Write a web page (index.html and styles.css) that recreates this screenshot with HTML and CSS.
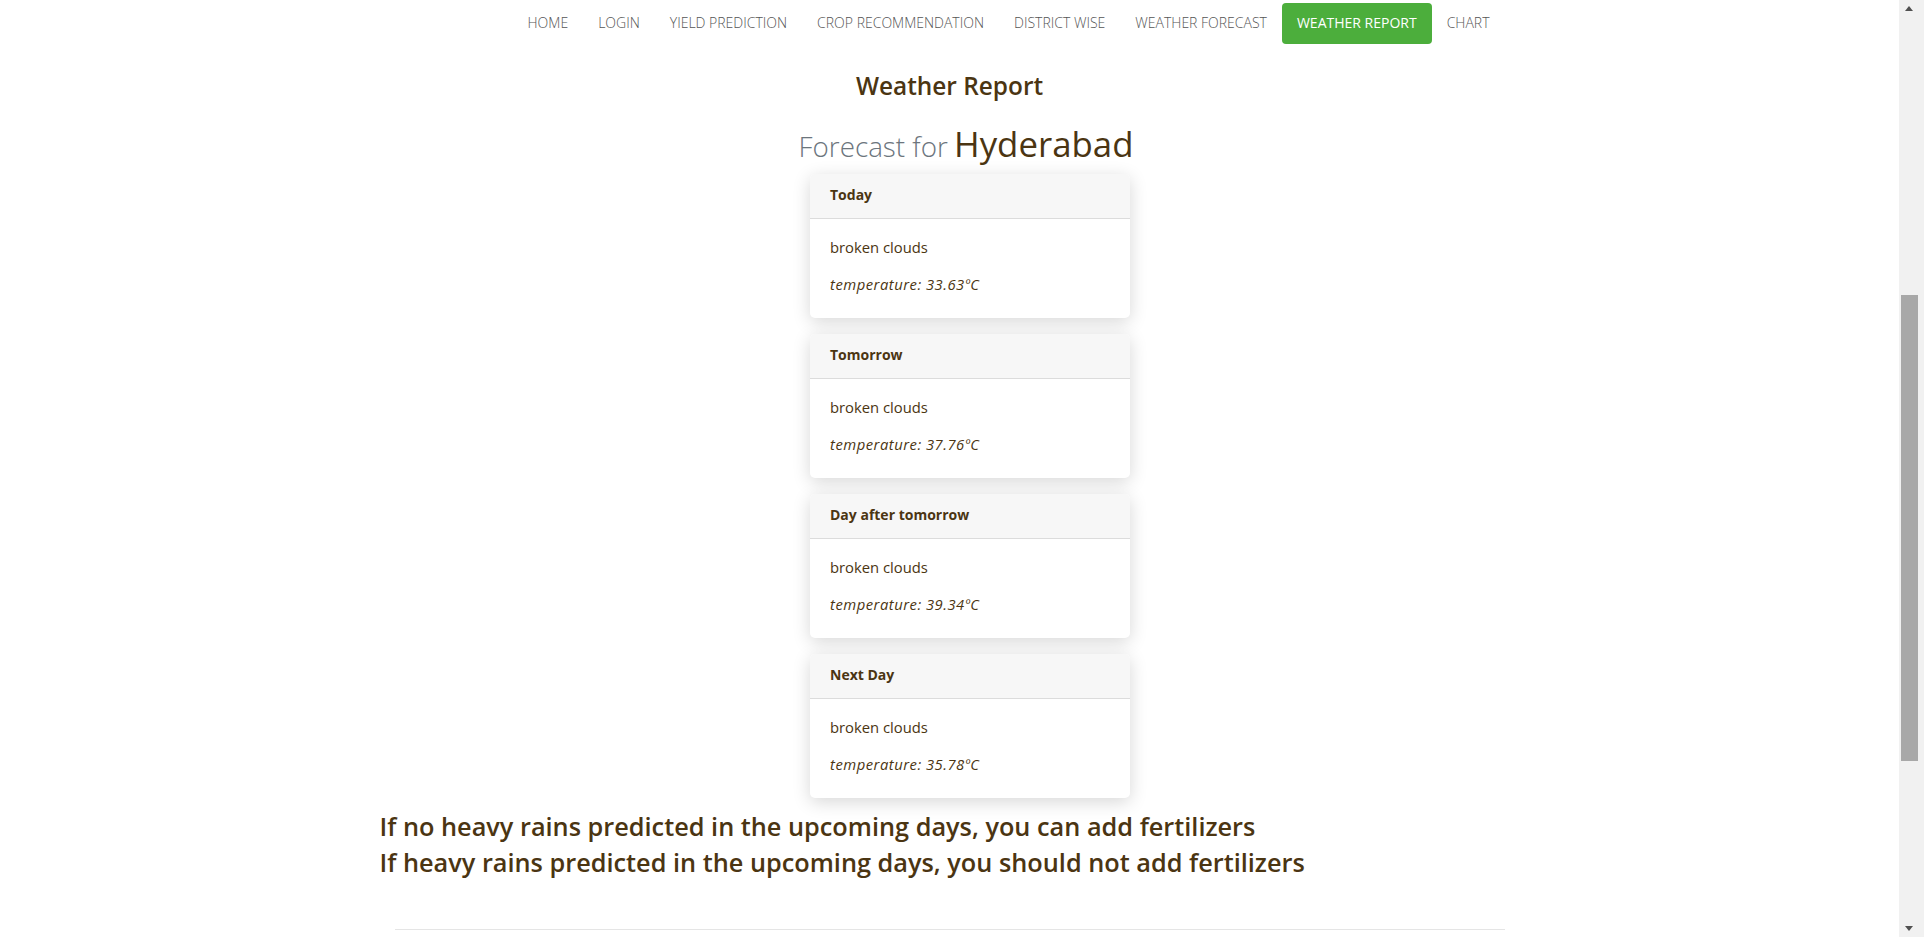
FILE: index.html
```html
<!DOCTYPE html>
<html lang="en">
<head>
<meta charset="utf-8">
<title>Weather Report</title>
<link rel="stylesheet" href="styles.css">
</head>
<body>
<div class="page">
  <nav class="navbar">
    <ul class="nav-list">
      <li><a class="nav-link" href="#">HOME</a></li>
      <li><a class="nav-link" href="#">LOGIN</a></li>
      <li><a class="nav-link" href="#">YIELD PREDICTION</a></li>
      <li><a class="nav-link" href="#">CROP RECOMMENDATION</a></li>
      <li><a class="nav-link" href="#">DISTRICT WISE</a></li>
      <li><a class="nav-link" href="#">WEATHER FORECAST</a></li>
      <li><a class="nav-link active" href="#">WEATHER REPORT</a></li>
      <li><a class="nav-link" href="#">CHART</a></li>
    </ul>
  </nav>
  <main class="container">
    <h3 class="title">Weather Report</h3>
    <div class="forecast">
      <h2 class="forecast-head"><span class="muted">Forecast for</span> <span class="city">Hyderabad</span></h2>
      <div class="card">
        <div class="card-header">Today</div>
        <div class="card-body">
          <p class="card-text">broken clouds</p>
          <p class="card-text temp">temperature: 33.63ºC</p>
        </div>
      </div>
      <div class="card">
        <div class="card-header">Tomorrow</div>
        <div class="card-body">
          <p class="card-text">broken clouds</p>
          <p class="card-text temp">temperature: 37.76ºC</p>
        </div>
      </div>
      <div class="card">
        <div class="card-header">Day after tomorrow</div>
        <div class="card-body">
          <p class="card-text">broken clouds</p>
          <p class="card-text temp">temperature: 39.34ºC</p>
        </div>
      </div>
      <div class="card">
        <div class="card-header">Next Day</div>
        <div class="card-body">
          <p class="card-text">broken clouds</p>
          <p class="card-text temp">temperature: 35.78ºC</p>
        </div>
      </div>
    </div>
    <div class="advice">
      <h4>If no heavy rains predicted in the upcoming days, you can add fertilizers</h4>
      <h4>If heavy rains predicted in the upcoming days, you should not add fertilizers</h4>
    </div>
    <hr class="rule">
  </main>
</div>
<div class="scrollbar">
  <div class="sb-btn"><span class="arrow-up"></span></div>
  <div class="sb-track">
    <div class="sb-thumb"></div>
  </div>
  <div class="sb-btn"><span class="arrow-down"></span></div>
</div>
</body>
</html>
```
FILE: styles.css
```css
html, body {
  margin: 0;
  padding: 0;
  height: 937px;
  overflow: hidden;
}
body {
  display: flex;
  background: #fff;
  font-family: "Open Sans", "Liberation Sans", sans-serif;
  color: #4b3512;
}
.page {
  flex: 1;
  min-width: 0;
}
.navbar {
  width: 1140px;
  margin: 0 auto;
  padding: 3px 0 0;
  box-sizing: border-box;
  display: flex;
  justify-content: flex-end;
}
.nav-list {
  list-style: none;
  margin: 0;
  padding: 0 15px 0 0;
  display: flex;
}
.nav-link {
  display: block;
  padding: 10px 15px;
  font-size: 14px;
  line-height: 20px;
  font-weight: 300;
  color: #555;
  text-decoration: none;
  border-radius: 4px;
}
.nav-link.active {
  padding-top: 10px;
  padding-bottom: 11px;
  background: #4cae3c;
  color: #fff;
  font-weight: 400;
}
.container {
  width: 1140px;
  margin: 0 auto;
}
.title {
  margin: 27px 0 0;
  text-align: center;
  font-size: 24.4px;
  line-height: 29px;
  font-weight: 600;
  color: #4b3512;
}
.forecast {
  display: flex;
  flex-direction: column;
  align-items: center;
  padding-left: 41px;
}
.forecast-head {
  margin: 24px 8px 6px 0;
  font-weight: 400;
  line-height: 40px;
  white-space: nowrap;
}
.muted {
  font-size: 27.8px;
  font-weight: 300;
  color: #6c757d;
}
.city {
  font-size: 34.8px;
  color: #4b3512;
}
.card {
  width: 320px;
  background: #fff;
  border-radius: 5px;
  box-shadow: 0 4px 18px rgba(0, 0, 0, 0.16);
  margin-bottom: 16px;
  overflow: hidden;
}
.card:last-child {
  margin-bottom: 0;
}
.card-header {
  background: #f7f7f7;
  border-bottom: 1px solid #dcdcdc;
  padding: 10px 20px 13px;
  font-size: 14px;
  line-height: 21px;
  font-weight: 700;
}
.card-body {
  padding: 18px 20px 23px;
}
.card-text {
  margin: 0 0 16px;
  font-size: 14.8px;
  line-height: 21px;
}
.card-text:last-child {
  margin-bottom: 0;
}
.temp {
  font-style: italic;
  letter-spacing: 0.5px;
}
.advice {
  margin-top: 14px;
}
.advice h4 {
  margin: 0 0 7px;
  font-size: 25.3px;
  line-height: 29px;
  font-weight: 600;
  color: #4b3512;
}
.rule {
  margin: 52px 15px 0;
  border: 0;
  border-top: 1px solid #e5e5e5;
}
.scrollbar {
  width: 25px;
  height: 937px;
  background: #f1f1f1;
  display: flex;
  flex-direction: column;
}
.sb-btn {
  height: 17px;
  display: flex;
  justify-content: center;
  align-items: center;
  padding-right: 6px;
}
.arrow-up {
  width: 0;
  height: 0;
  border-left: 4.5px solid transparent;
  border-right: 4.5px solid transparent;
  border-bottom: 5px solid #505050;
}
.arrow-down {
  width: 0;
  height: 0;
  border-left: 4.5px solid transparent;
  border-right: 4.5px solid transparent;
  border-top: 5px solid #505050;
}
.sb-track {
  flex: 1;
  padding: 278px 6px 0 2px;
}
.sb-thumb {
  height: 466px;
  background: #a8a8a8;
}
```
